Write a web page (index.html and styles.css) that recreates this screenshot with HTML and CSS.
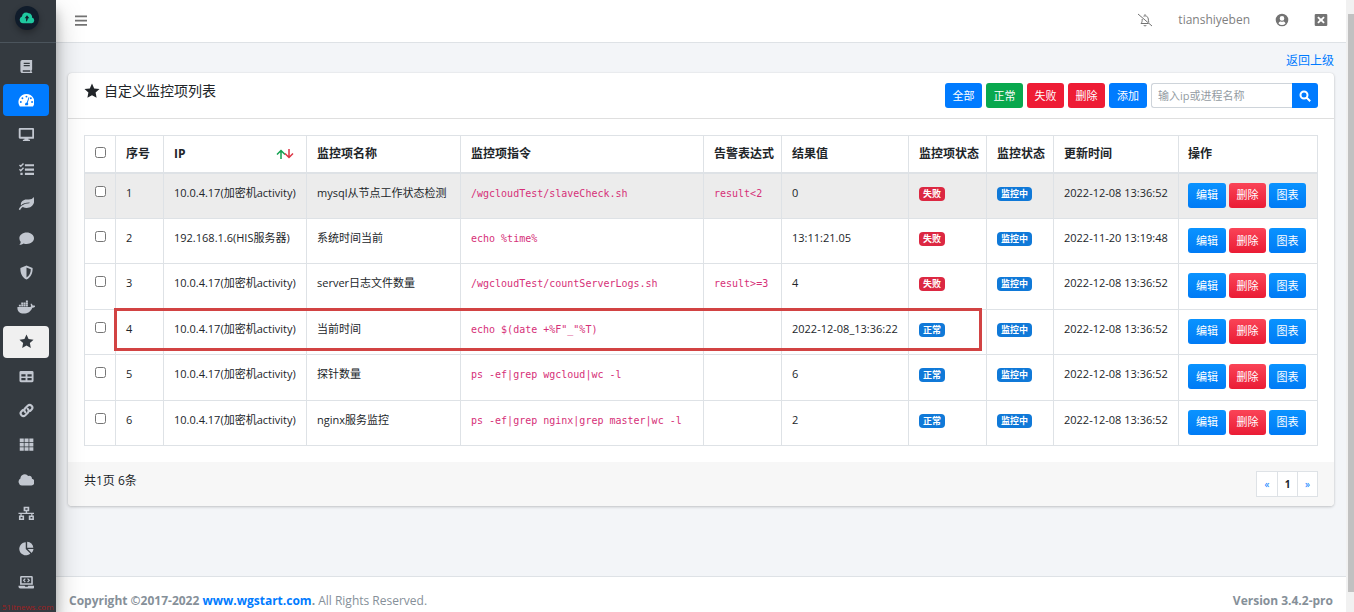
FILE: index.html
```html
<!DOCTYPE html>
<html lang="zh-CN">
<head>
<meta charset="utf-8">
<title>自定义监控项列表</title>
<link rel="stylesheet" href="styles.css">
</head>
<body>
<aside class="sidebar">
  <a class="brand" href="#" aria-label="首页"><span class="brand-logo"><svg viewBox="0 0 24 18"><path fill="#1fc8a0" d="M19.5 8.2A5.2 5.2 0 0 0 14.6 2 6.4 6.4 0 0 0 4.4 6.6 5.3 5.3 0 0 0 6 16.8h13.2a4.4 4.4 0 0 0 .3-8.6z"/><path fill="#101c2b" d="M12 5 15.500 9.500h-2.300c0 2-.6 3.700-2.200 5.300-.5-1.500-.5-3.500-.2-5.300H8.500z"/></svg></span></a>
  <nav class="side-nav">
    <a class="side-link" href="#" aria-label="手册"><svg viewBox="0 0 16 16"><path fill-rule="evenodd" d="M3.5 1H14v10.3l-.6.7v1.5l.6.4V15H3.7A2.2 2.2 0 0 1 1.500 13V3a2 2 0 0 1 2-2zM5 4v1.200h6.500V4zm0 2.500v1.200h6.500V6.500zM4 12v1.500h8V12z"/></svg></a>
    <a class="side-link side-link-active" href="#" aria-label="面板"><svg viewBox="0 0 18 16"><path fill-rule="evenodd" d="M9 1a8.500 8.500 0 0 0-7.300 12.800c.2.400.500.500.900.500h12.800c.4 0 .7-.1.900-.5A8.500 8.500 0 0 0 9 1zm0 1.800a1 1 0 1 1 0 2 1 1 0 0 1 0-2zM4.700 4.600a1 1 0 1 1 0 2 1 1 0 0 1 0-2zM3 8.600a1 1 0 1 1 0 2 1 1 0 0 1 0-2zm12 0a1 1 0 1 1 0 2 1 1 0 0 1 0-2zm-1.300-4a1 1 0 1 1 0 2 1 1 0 0 1 0-2zM11.300 4.500l.9.300-1.800 5.600a1.900 1.900 0 0 1-.2 2.600H7.800a1.900 1.900 0 0 1 1.600-2.900z"/></svg></a>
    <a class="side-link" href="#" aria-label="主机"><svg viewBox="0 0 18 16"><path fill-rule="evenodd" d="M2 1h14a1.200 1.200 0 0 1 1.200 1.200v9A1.200 1.200 0 0 1 16 12.400h-5l.4 1.300h1.400V15H5.200v-1.300h1.400l.4-1.300H2A1.200 1.200 0 0 1 .8 11.200v-9A1.200 1.200 0 0 1 2 1zm.8 1.900v7.500h12.400V2.900z"/></svg></a>
    <a class="side-link" href="#" aria-label="任务"><svg viewBox="0 0 16 16"><path d="M6.300 2.300H16v2.300H6.300zm0 4.600H16v2.300H6.300zm0 4.600H16v2.300H6.300zM1.500 11.500h2.400v2.400H1.500z"/><path fill="none" stroke="currentColor" stroke-width="1.500" d="m.5 3.200 1.400 1.400 2.900-3M.5 7.800l1.400 1.400 2.900-3"/></svg></a>
    <a class="side-link" href="#" aria-label="探针"><svg viewBox="0 0 18 16"><path d="M16.500 1c-1 2-2.600 2.600-5 2.600H9C5.500 3.600 3 6.100 3 9l.1 1C5.500 7.800 8 7 12 6.900c.5 0 .5.700 0 .8C6 8 2.400 10.800.8 14.200l1.400.9c.8-1.500 1.700-2.500 2.900-3.300 5 2.500 11.800.2 12.200-6.400A9 9 0 0 0 16.500 1z"/></svg></a>
    <a class="side-link" href="#" aria-label="消息"><svg viewBox="0 0 16 16"><path d="M8.200 1.500C12.500 1.500 16 4.200 16 7.700s-3.500 6.100-7.800 6.100c-1.200 0-2.300-.2-3.300-.6C3.800 14 2.200 14.800.4 14.800c.8-1 1.400-2 1.500-3.200A5.700 5.700 0 0 1 .4 7.700c0-3.500 3.500-6.200 7.800-6.200z"/></svg></a>
    <a class="side-link" href="#" aria-label="防护"><svg viewBox="0 0 16 16"><path fill-rule="evenodd" d="m8 .5 6.500 2.600c.3 5.400-1.700 9.900-6.500 12.400C3.200 13 1.200 8.500 1.500 3.100zm0 2.200v10.600c3.100-2 4.600-5 4.600-8.800z"/></svg></a>
    <a class="side-link" href="#" aria-label="Docker"><svg viewBox="0 0 20 16"><path d="M.5 7.500h14c.5-.9.500-2.200-.1-3.200l.8-.7c.9.600 1.400 1.400 1.500 2.300.9-.2 2 0 2.900.6-.6 1.300-1.800 1.900-3.300 1.800C14.700 12.600 11.500 14.500 7.200 14.500 2.500 14.500 0 12 .5 7.500zM2 5h2.100v2H2zm2.500 0h2.100v2H4.500zM7 5h2.100v2H7zm2.500 0h2.100v2H9.500zM4.500 2.700h2.100v2H4.500zM7 2.700h2.100v2H7zm2.500 0h2.100v2H9.500zm0-2.300h2.100v2H9.500z"/></svg></a>
    <a class="side-link side-link-current" href="#" aria-label="自定义监控项"><svg viewBox="0 0 16 16"><path d="m8 .6 2.200 4.800 5.300.6-3.900 3.600 1 5.200L8 12.200l-4.600 2.600 1-5.200L.5 6l5.300-.6z"/></svg></a>
    <a class="side-link" href="#" aria-label="数据表"><svg viewBox="0 0 16 16"><path fill-rule="evenodd" d="M2 2h12a1.500 1.500 0 0 1 1.500 1.500v9A1.500 1.500 0 0 1 14 14H2a1.500 1.500 0 0 1-1.500-1.500v-9A1.500 1.500 0 0 1 2 2zm.5 3.500v2.400H7V5.500zm6.500 0v2.400h4.500V5.500zM2.500 9.600V12H7V9.600zm6.500 0V12h4.500V9.600z"/></svg></a>
    <a class="side-link" href="#" aria-label="链接"><svg viewBox="0 0 16 16"><path fill="none" stroke="currentColor" stroke-width="2.300" stroke-linecap="round" d="M6.600 9.700a3 3 0 0 1 0-4.100l2.700-2.700a2.900 2.900 0 0 1 4.100 4.100l-1.500 1.500M9.400 6.300a3 3 0 0 1 0 4.100l-2.700 2.700A2.900 2.900 0 0 1 2.600 9l1.500-1.500"/></svg></a>
    <a class="side-link" href="#" aria-label="端口"><svg viewBox="0 0 16 16"><path d="M.8 1.500h4.300v3.800H.8zm5.100 0h4.300v3.800H5.900zm5.100 0h4.300v3.800H11zM.8 6.200h4.300V10H.8zm5.100 0h4.300V10H5.900zm5.100 0h4.300V10H11zM.8 10.900h4.300v3.800H.8zm5.100 0h4.300v3.800H5.900zm5.100 0h4.300v3.800H11z"/></svg></a>
    <a class="side-link" href="#" aria-label="云"><svg viewBox="0 0 18 16"><path d="M14.800 7.300a2.800 2.800 0 0 0-3.900-3.100A4.600 4.600 0 0 0 2.600 7 4 4 0 0 0 4 14.400h10.300a3.600 3.600 0 0 0 .5-7.100z"/></svg></a>
    <a class="side-link" href="#" aria-label="拓扑"><svg viewBox="0 0 18 16"><path fill-rule="evenodd" d="M6 .7h6v5H9.800v1.500H17.500v1.300h-2.100v1.600H17V15h-5.500v-4.900h2.600V8.500H3.900v1.600h2.600V15H1v-4.900h1.600V8.500H.5V7.200h7.700V5.700H6zm1.800 1.700V4h2.400V2.400zm-5 9.400v1.500h2v-1.500zm10.500 0v1.500h2v-1.500z"/></svg></a>
    <a class="side-link" href="#" aria-label="统计"><svg viewBox="0 0 16 16"><path d="M7.200 1.300v7.200l4.900 4.900A7 7 0 1 1 7.200 1.300zM8.700.7a7 7 0 0 1 6.600 6.600H8.700zm.6 7.900h6.200a7 7 0 0 1-2 4.200z"/></svg></a>
    <a class="side-link" href="#" aria-label="终端"><svg viewBox="0 0 18 16"><path fill-rule="evenodd" d="M3.500 1h11a1.300 1.300 0 0 1 1.300 1.300v8.200H2.200V2.300A1.300 1.300 0 0 1 3.500 1zm.4 1.700v6.100h10.200V2.700zM.5 11.500h6.700l.5.900h2.600l.5-.9h6.700v.8a2.200 2.200 0 0 1-2.100 2.200H2.600a2.200 2.200 0 0 1-2.100-2.200z"/><path fill="none" stroke="currentColor" stroke-width="1.300" d="M7.800 3.800 6 5.700l1.800 1.900m2.400-3.800L12 5.700l-1.800 1.900"/></svg></a>
  </nav>
  <span class="watermark">51itnews.com</span>
</aside>

<div class="page">
  <header class="topbar">
    <button class="icon-button" type="button" aria-label="菜单"><svg viewBox="0 0 14 14"><path d="M1 1.500h12v1.700H1zm0 4.300h12v1.700H1zm0 4.300h12v1.700H1z"/></svg></button>
    <div class="topbar-right">
      <button class="icon-button" type="button" aria-label="静音"><svg viewBox="0 0 16 14"><path fill="none" stroke="currentColor" d="m1 1 14 12M4 10.500h7.500M4 10.500c1-1 1.200-2.300 1.200-4.500M6.500 3.200A3.300 3.300 0 0 1 11.300 6c0 1.300.2 2.500.6 3.300M8 1.200v1.300M6.800 12a1.300 1.300 0 0 0 2.500 0"/></svg></button>
      <span class="user-name">tianshiyeben</span>
      <button class="icon-button" type="button" aria-label="账户"><svg viewBox="0 0 14 14"><path fill-rule="evenodd" d="M7 .7a6.300 6.300 0 1 1 0 12.600A6.300 6.300 0 0 1 7 .7zm0 2.400a2.300 2.300 0 1 0 0 4.600 2.300 2.300 0 0 0 0-4.600zM3.500 10.500a4.600 4.600 0 0 0 7 0C10 9.200 9 8.600 8.300 8.600a4 4 0 0 1-2.600 0c-.8 0-1.800.6-2.200 1.900z"/></svg></button>
      <button class="icon-button" type="button" aria-label="退出"><svg viewBox="0 0 14 14"><path fill-rule="evenodd" d="M1.500 1h11l.8.800v10.400l-.8.800h-11l-.8-.8V1.800zm3 2.500L3.300 4.700 5.600 7 3.300 9.300l1.200 1.200L7 8.300l2.500 2.200 1.200-1.200L8.400 7l2.300-2.300-1.200-1.200L7 5.700z"/></svg></button>
    </div>
  </header>

  <main class="content">
    <div class="back-row"><a href="#">返回上级</a></div>
    <section class="card">
      <div class="card-header">
        <h1 class="card-title"><svg viewBox="0 0 16 16"><path d="m8 .6 2.200 4.800 5.300.6-3.900 3.600 1 5.200L8 12.200l-4.600 2.600 1-5.200L.5 6l5.300-.6z"/></svg>自定义监控项列表</h1>
        <form class="toolbar">
          <button class="btn btn-blue" type="button">全部</button>
          <button class="btn btn-green" type="button">正常</button>
          <button class="btn btn-red" type="button">失败</button>
          <button class="btn btn-red" type="button">删除</button>
          <button class="btn btn-wide btn-blue" type="button">添加</button>
          <div class="search">
            <input class="search-input" type="text" placeholder="输入ip或进程名称" aria-label="输入ip或进程名称">
            <button class="search-button" type="button" aria-label="搜索"><svg viewBox="0 0 12 12"><path fill="none" stroke="currentColor" stroke-width="2" d="M8.500 5a3.500 3.500 0 1 1-7 0 3.500 3.500 0 0 1 7 0zM7.500 7.500l3.700 3.700"/></svg></button>
          </div>
        </form>
      </div>
      <div class="card-body">
        <table class="monitor-table">
          <colgroup><col class="col-check"><col class="col-index"><col class="col-ip"><col class="col-name"><col class="col-command"><col class="col-rule"><col class="col-result"><col class="col-rule"><col class="col-monitor"><col class="col-time"><col class="col-actions"></colgroup>
          <thead>
            <tr><th><input type="checkbox" aria-label="全选"></th><th>序号</th><th><span class="sortable">IP<svg class="sort" viewBox="0 0 18 10"><path fill="none" stroke="#12a150" stroke-width="1.500" d="M5 10V1.500M1 5.500l4-4 4 4"/><path fill="none" stroke="#dc3545" stroke-width="1.500" d="M13 0v8.500m-4-4 4 4 4-4"/></svg></span></th><th>监控项名称</th><th>监控项指令</th><th>告警表达式</th><th>结果值</th><th>监控项状态</th><th>监控状态</th><th>更新时间</th><th>操作</th></tr>
          </thead>
          <tbody>
            <tr class="row-hover"><td><input type="checkbox" aria-label="选择 1"></td><td>1</td><td>10.0.4.17(加密机activity)</td><td>mysql从节点工作状态检测</td><td><code>/wgcloudTest/slaveCheck.sh</code></td><td><code>result&lt;2</code></td><td>0</td><td><span class="badge badge-red">失败</span></td><td><span class="badge">监控中</span></td><td>2022-12-08 13:36:52</td><td><div class="actions"><button class="btn btn-wide btn-blue-soft" type="button">编辑</button><button class="btn btn-red-soft" type="button">删除</button><button class="btn btn-blue-soft" type="button">图表</button></div></td></tr>
            <tr><td><input type="checkbox" aria-label="选择 2"></td><td>2</td><td>192.168.1.6(HIS服务器)</td><td>系统时间当前</td><td><code>echo %time%</code></td><td></td><td>13:11:21.05</td><td><span class="badge badge-red">失败</span></td><td><span class="badge">监控中</span></td><td>2022-11-20 13:19:48</td><td><div class="actions"><button class="btn btn-wide btn-blue-soft" type="button">编辑</button><button class="btn btn-red-soft" type="button">删除</button><button class="btn btn-blue-soft" type="button">图表</button></div></td></tr>
            <tr><td><input type="checkbox" aria-label="选择 3"></td><td>3</td><td>10.0.4.17(加密机activity)</td><td>server日志文件数量</td><td><code>/wgcloudTest/countServerLogs.sh</code></td><td><code>result&gt;=3</code></td><td>4</td><td><span class="badge badge-red">失败</span></td><td><span class="badge">监控中</span></td><td>2022-12-08 13:36:52</td><td><div class="actions"><button class="btn btn-wide btn-blue-soft" type="button">编辑</button><button class="btn btn-red-soft" type="button">删除</button><button class="btn btn-blue-soft" type="button">图表</button></div></td></tr>
            <tr><td><input type="checkbox" aria-label="选择 4"></td><td>4</td><td>10.0.4.17(加密机activity)</td><td>当前时间</td><td><code>echo $(date +%F"_"%T)</code></td><td></td><td>2022-12-08_13:36:22</td><td><span class="badge">正常</span></td><td><span class="badge">监控中</span></td><td>2022-12-08 13:36:52</td><td><div class="actions"><button class="btn btn-wide btn-blue-soft" type="button">编辑</button><button class="btn btn-red-soft" type="button">删除</button><button class="btn btn-blue-soft" type="button">图表</button></div></td></tr>
            <tr><td><input type="checkbox" aria-label="选择 5"></td><td>5</td><td>10.0.4.17(加密机activity)</td><td>探针数量</td><td><code>ps -ef|grep wgcloud|wc -l</code></td><td></td><td>6</td><td><span class="badge">正常</span></td><td><span class="badge">监控中</span></td><td>2022-12-08 13:36:52</td><td><div class="actions"><button class="btn btn-wide btn-blue-soft" type="button">编辑</button><button class="btn btn-red-soft" type="button">删除</button><button class="btn btn-blue-soft" type="button">图表</button></div></td></tr>
            <tr><td><input type="checkbox" aria-label="选择 6"></td><td>6</td><td>10.0.4.17(加密机activity)</td><td>nginx服务监控</td><td><code>ps -ef|grep nginx|grep master|wc -l</code></td><td></td><td>2</td><td><span class="badge">正常</span></td><td><span class="badge">监控中</span></td><td>2022-12-08 13:36:52</td><td><div class="actions"><button class="btn btn-wide btn-blue-soft" type="button">编辑</button><button class="btn btn-red-soft" type="button">删除</button><button class="btn btn-blue-soft" type="button">图表</button></div></td></tr>
          </tbody>
        </table>
        <div class="highlight"></div>
      </div>
      <div class="card-footer">
        <span>共1页 6条</span>
        <nav class="pager" aria-label="分页"><a href="#">«</a><a class="pager-current" href="#">1</a><a href="#">»</a></nav>
      </div>
    </section>
  </main>

  <footer class="footer">
    <span><strong>Copyright ©2017-2022 <a href="#">www.wgstart.com</a>.</strong> All Rights Reserved.</span>
    <strong>Version 3.4.2-pro</strong>
  </footer>
</div>
<div class="scrollbar"><div class="scrollbar-thumb"></div></div>
</body>
</html>
```
FILE: styles.css
```css
* { box-sizing: border-box; }
body {
  margin: 0;
  display: flex;
  height: 100vh;
  overflow: hidden;
  background: #f3f5f8;
  color: #212529;
  font: 13px/20px "Open Sans", "Noto Sans CJK SC", sans-serif;
}
a { color: #007bff; text-decoration: none; }
button, input { font-family: inherit; }
svg { display: block; fill: currentColor; }

.sidebar {
  position: relative;
  z-index: 2;
  flex: none;
  width: 56px;
  display: flex;
  flex-direction: column;
  background: #343a40;
  box-shadow: 0 14px 28px rgba(0, 0, 0, .25), 0 10px 10px rgba(0, 0, 0, .22);
}
.brand {
  display: flex;
  justify-content: center;
  padding: 6px 2px 12px 0;
  border-bottom: 1px solid #4b545c;
}
.brand-logo {
  display: grid;
  place-items: center;
  width: 24px;
  height: 24px;
  border-radius: 50%;
  background: #101c2b;
  box-shadow: 0 3px 6px rgba(0, 0, 0, .3);
}
.brand-logo svg { width: 16px; height: 12px; }
.side-nav {
  flex: 1;
  display: flex;
  flex-direction: column;
  justify-content: space-between;
  padding: 7px 7px 13px 3px;
}
.side-link {
  display: grid;
  place-items: center;
  height: 32px;
  border-radius: 4px;
  color: #c2c7d0;
}
.side-link svg { height: 15px; }
.side-link-active { background: #007bff; color: #fff; }
.side-link-current { background: #f0f0f0; color: #343a40; }
.watermark {
  position: absolute;
  left: 2px;
  bottom: 0;
  color: #a02020;
  font-size: 8px;
  line-height: 10px;
}

.page { flex: 1; min-width: 0; display: flex; flex-direction: column; }
.topbar {
  display: flex;
  align-items: center;
  justify-content: space-between;
  height: 43px;
  padding: 0 18px;
  background: #fff;
  border-bottom: 1px solid #dee2e6;
  color: #808080;
}
.topbar-right { display: flex; align-items: center; gap: 25px; padding-bottom: 2px; }
.icon-button { padding: 0; border: 0; background: none; color: #737373; }
.icon-button svg { height: 14px; }
.user-name { font-size: 12px; }

.content { flex: 1; padding: 8px 12px; }
.back-row { text-align: right; font-size: 12px; padding-bottom: 2px; }
.card {
  background: #fff;
  border-radius: 4px;
  box-shadow: 0 0 1px rgba(0, 0, 0, .13), 0 1px 3px rgba(0, 0, 0, .2);
}
.card-header {
  display: flex;
  justify-content: space-between;
  padding: 10px 16px;
  border-bottom: 1px solid #dfdfdf;
}
.card-title {
  display: flex;
  align-items: center;
  gap: 4px;
  height: 16px;
  margin: 0;
  font-size: 14px;
  font-weight: 400;
}
.card-title svg { width: 16px; height: 16px; }
.toolbar { display: flex; gap: 4px; }
.btn {
  width: 37px;
  height: 25px;
  padding: 0 0 2px;
  border: 0;
  border-radius: 3px;
  color: #fff;
  font-size: 11px;
}
.btn-wide { width: 38px; }
.btn-blue { background: #007bff; }
.btn-green { background: #09a84e; }
.btn-red { background: #ee1c35; }
.btn-blue-soft { background: linear-gradient(#0a93ff, #007bf5); }
.btn-red-soft { background: linear-gradient(#fa4457, #ea1c35); }
.search { display: flex; width: 167px; }
.search-input {
  flex: 1;
  min-width: 0;
  padding: 0 6px;
  border: 1px solid #ced4da;
  border-right: 0;
  border-radius: 3px 0 0 3px;
  font-size: 11px;
}
.search-input::placeholder { color: #939ba2; }
.search-button {
  display: grid;
  place-items: center;
  width: 26px;
  padding: 0;
  border: 0;
  border-radius: 0 3px 3px 0;
  background: #007bff;
  color: #fff;
}
.search-button svg { width: 12px; }

.card-body { position: relative; padding: 16px; }
.monitor-table {
  width: 100%;
  height: 311px;
  table-layout: fixed;
  border-collapse: collapse;
  font-size: 11px;
  white-space: nowrap;
}
.col-check { width: 31px; }
.col-index { width: 48px; }
.col-ip { width: 143px; }
.col-name { width: 154px; }
.col-command { width: 243px; }
.col-rule { width: 78px; }
.col-result { width: 127px; }
.col-monitor { width: 67px; }
.col-time { width: 125px; }
.col-actions { width: 139px; }
.monitor-table th, .monitor-table td {
  padding: 9px 0 0 10px;
  border: 1px solid #dee2e6;
  text-align: left;
  vertical-align: top;
  line-height: 20px;
}
.monitor-table thead tr { height: 37px; }
.monitor-table th { padding-top: 8px; font-size: 12px; border-bottom-width: 2px; }
.monitor-table td:last-child, .monitor-table th:last-child { padding-left: 9px; }
.monitor-table input { display: block; width: 11px; height: 11px; margin: 3px 0 0; }
.row-hover { background: #ececec; }
.sortable { display: flex; align-items: center; justify-content: space-between; padding-right: 12px; }
.sort { width: 18px; height: 10px; }
code { color: #d63078; font: 10px/20px "DejaVu Sans Mono", monospace; }
.badge {
  display: inline-block;
  padding: 0 4px;
  border-radius: 4px;
  background: #1079d8;
  color: #fff;
  font-size: 9px;
  font-weight: 700;
  line-height: 14px;
}
.badge-red { background: #dc2842; }
.actions { display: flex; gap: 3px; }
.highlight {
  position: absolute;
  left: 46px;
  top: 189px;
  width: 868px;
  height: 43px;
  border: 3px solid #d24343;
}
.card-footer {
  display: flex;
  justify-content: space-between;
  padding: 9px 16px;
  border-radius: 0 0 4px 4px;
  background: #f7f7f7;
  font-size: 12px;
}
.pager { display: flex; border: 1px solid #dee2e6; background: #fff; font-size: 10px; line-height: 24px; }
.pager a { width: 20px; text-align: center; }
.pager a + a { border-left: 1px solid #dee2e6; }
.pager .pager-current { color: #212529; font-weight: 700; }

.footer {
  display: flex;
  justify-content: space-between;
  height: 36px;
  padding: 14px 13px 0;
  border-top: 1px solid #dee2e6;
  background: #fff;
  color: #869099;
  font-size: 12px;
}
.scrollbar { flex: none; width: 8px; padding: 14px 0 20px 2px; background: #f1f1f1; }
.scrollbar-thumb { height: 100%; background: #c1c1c1; }
```
